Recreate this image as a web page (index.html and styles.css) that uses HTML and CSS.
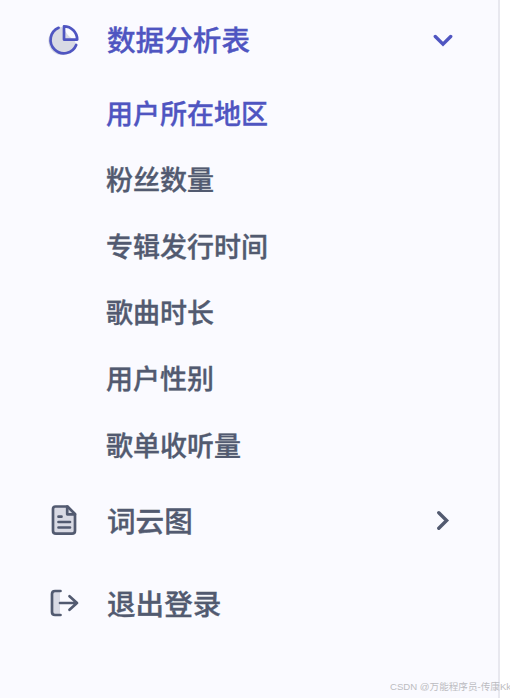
FILE: index.html
```
<!DOCTYPE html>
<html lang="zh-CN">
<head>
    <meta charset="UTF-8">
    <meta name="viewport" content="width=device-width, initial-scale=1.0">
    <title>数据分析表</title>
    <link rel="stylesheet" href="styles.css">
</head>
<body>
    <nav class="sidebar">
        <a class="menu-item first active">
            <svg class="icon" viewBox="0 0 32 32">
                <path class="tint" d="M14 3A14 14 0 1 0 28 20L26 15.5Q21 14 16.5 6z"/>
                <path d="M10.6 3.8A13.3 13.3 0 1 0 28.2 21"/>
                <path d="M16 2.4A13.2 13.2 0 0 1 29.2 15.6H16z"/>
            </svg>
            <span class="label">数据分析表</span>
            <svg class="arrow" viewBox="0 0 20 20"><path d="M2.3 6.5L10 14.1L17.7 6.5"/></svg>
        </a>
        <ul class="submenu">
            <li class="active">用户所在地区</li>
            <li>粉丝数量</li>
            <li>专辑发行时间</li>
            <li>歌曲时长</li>
            <li>用户性别</li>
            <li>歌单收听量</li>
        </ul>
        <a class="menu-item">
            <svg class="icon" viewBox="0 0 32 32">
                <path class="tint" d="M5 3H19L27 11V29H5z"/>
                <path d="M7.5 2.5H19.5L27 10V26.7Q27 29.7 24 29.7H8Q5 29.7 5 26.7V5Q5 2.5 7.5 2.5z"/>
                <path d="M19.2 2.5V10.3H27M10.5 12.7H13.5M10.5 18H22M10.5 23.5H22"/>
            </svg>
            <span class="label">词云图</span>
            <svg class="arrow" viewBox="0 0 20 20"><path d="M5.8 2.8L13.6 10.5L5.8 18.2"/></svg>
        </a>
        <a class="menu-item">
            <svg class="icon" viewBox="0 0 32 32">
                <path class="tint" d="M4 4H12V28H4z"/>
                <path d="M12.5 4H7Q4 4 4 7V25Q4 28 7 28H12.5M12 16H29M21.5 9.2L29 16L21.5 22.8"/>
            </svg>
            <span class="label">退出登录</span>
        </a>
    </nav>
    <div class="watermark">CSDN @万能程序员-传康Kk</div>
</body>
</html>
```
FILE: styles.css
```
* {
    box-sizing: border-box;
}
body {
    margin: 0;
    height: 698px;
    overflow: hidden;
    background: #fff;
    color: #525a70;
    font-family: "Noto Sans CJK SC", sans-serif;
    font-weight: 500;
    -webkit-text-stroke: 0.35px currentColor;
}
.sidebar {
    width: 500px;
    height: 698px;
    background: #fafaff;
    border-right: 2px solid #e8e8ef;
}
.menu-item {
    display: flex;
    align-items: center;
    height: 83px;
    padding: 0 45px 0 48px;
    font-size: 28.6px;
}
.menu-item.first {
    height: 79px;
}
.active {
    color: #4f55c1;
}
.label {
    flex: 1;
    margin-left: 27px;
    padding-bottom: 1px;
}
.first .label {
    padding-bottom: 2px;
}
.icon {
    width: 32px;
    height: 32px;
}
.icon path,
.arrow path {
    fill: none;
    stroke: currentColor;
    stroke-width: 2.7;
    stroke-linecap: round;
    stroke-linejoin: round;
}
.icon .tint {
    fill: #d9dae4;
    stroke: none;
}
.arrow {
    width: 20px;
    height: 20px;
}
.arrow path {
    stroke-width: 3.4;
    stroke-linejoin: miter;
}
.submenu {
    margin: 0;
    padding: 0.8px 0 0.5px 106px;
    list-style: none;
    font-size: 27px;
}
.submenu li {
    height: 66.4px;
    line-height: 66.4px;
}
.watermark {
    position: absolute;
    left: 390px;
    bottom: 4px;
    width: 120px;
    overflow: hidden;
    white-space: nowrap;
    color: #bcbcc1;
    font-family: "Liberation Sans", "Noto Sans CJK SC", sans-serif;
    font-size: 9.6px;
    font-weight: 400;
    line-height: 14px;
    -webkit-text-stroke: 0;
}
```
